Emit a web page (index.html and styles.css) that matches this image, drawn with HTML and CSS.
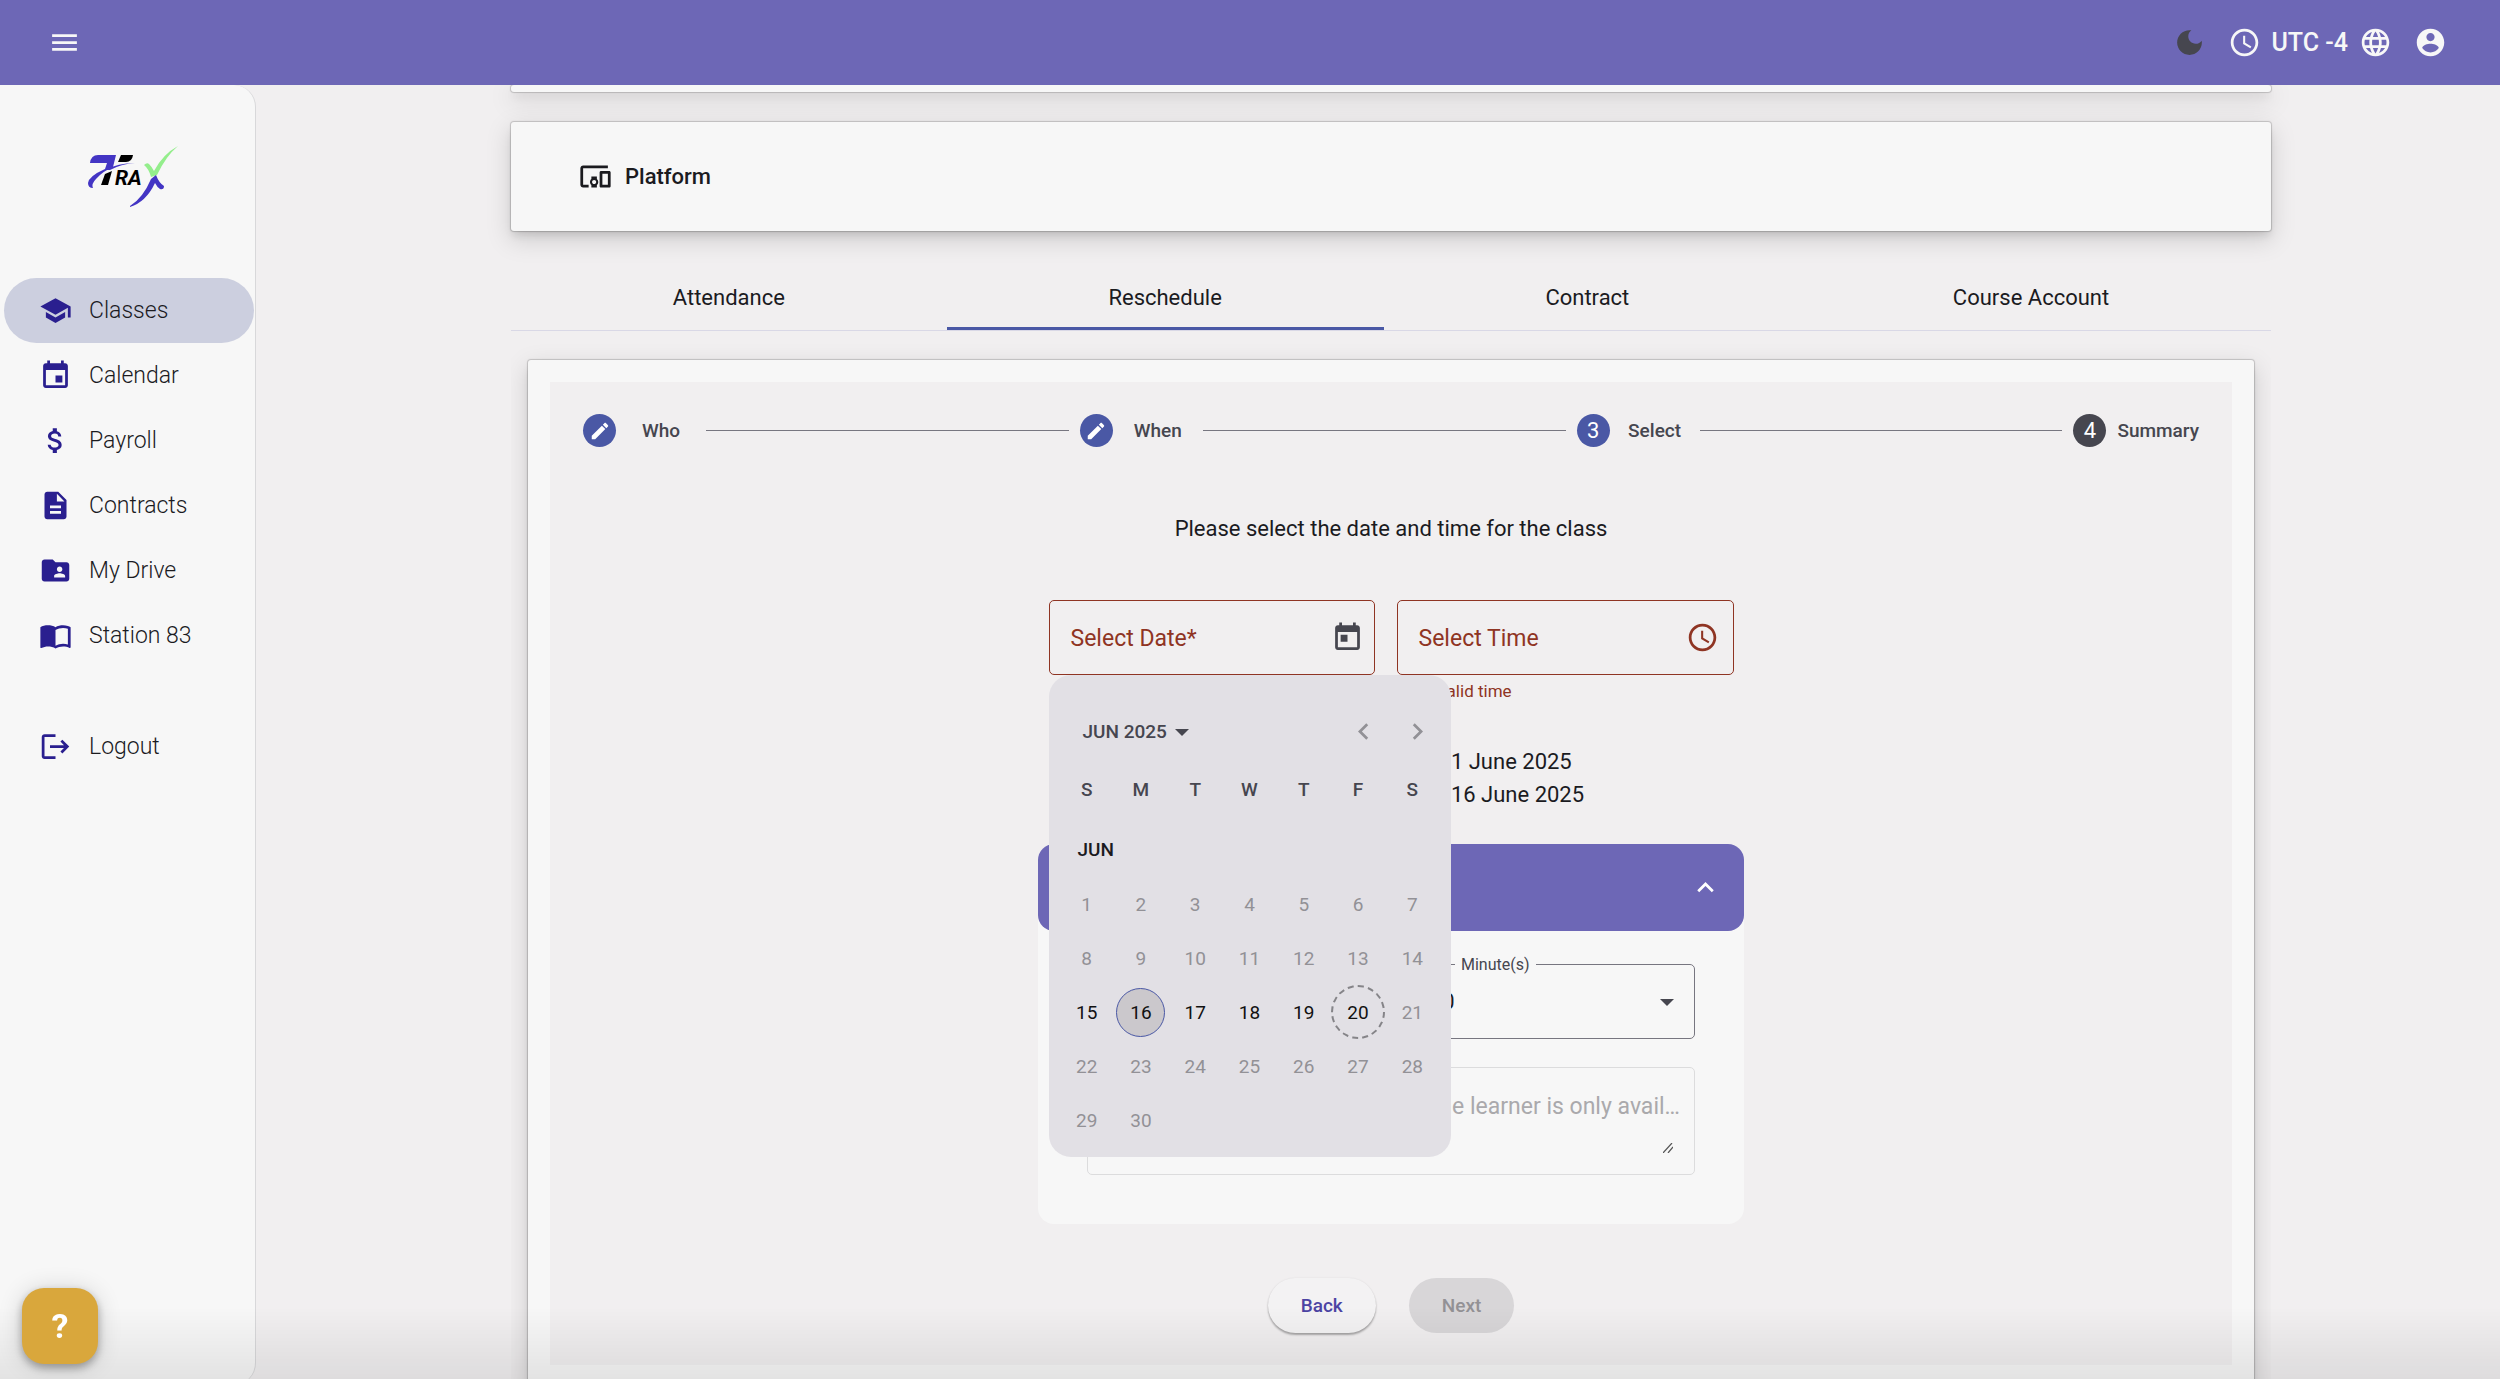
FILE: index.html
```html
<!DOCTYPE html>
<html lang="en">
<head>
    <meta charset="UTF-8">
    <meta name="viewport" content="width=device-width, initial-scale=1.0">
    <title>Trax - Classes</title>
    <link rel="stylesheet" href="styles.css">
</head>
<body>
    <header class="topbar">
        <button class="icon-btn" aria-label="Menu">
            <svg class="icon" viewBox="0 0 24 24"><path d="M3 18h18v-2H3v2zm0-5h18v-2H3v2zm0-7v2h18V6H3z"/></svg>
        </button>
        <div class="topbar-right">
            <button class="icon-btn moon" aria-label="Dark mode">
                <svg class="icon" viewBox="0 0 24 24"><path d="M12 3c-4.97 0-9 4.03-9 9s4.03 9 9 9 9-4.03 9-9c0-.46-.04-.92-.1-1.36-.98 1.37-2.58 2.26-4.4 2.26-2.98 0-5.4-2.42-5.4-5.4 0-1.81.89-3.42 2.26-4.4-.44-.06-.9-.1-1.36-.1z"/></svg>
            </button>
            <button class="utc">
                <svg class="icon" viewBox="0 0 24 24"><path d="M11.99 2C6.47 2 2 6.48 2 12s4.47 10 9.99 10C17.52 22 22 17.52 22 12S17.52 2 11.99 2zM12 20c-4.42 0-8-3.58-8-8s3.58-8 8-8 8 3.58 8 8-3.58 8-8 8zm.5-13H11v6l5.25 3.15.75-1.23-4.5-2.67z"/></svg>
                <span>UTC -4</span>
                <svg class="icon" viewBox="0 0 24 24"><path d="M11.99 2C6.47 2 2 6.48 2 12s4.47 10 9.99 10C17.52 22 22 17.52 22 12S17.52 2 11.99 2zm6.93 6h-2.95c-.32-1.25-.78-2.45-1.38-3.56 1.84.63 3.37 1.91 4.33 3.56zM12 4.04c.83 1.2 1.48 2.53 1.91 3.96h-3.82c.43-1.43 1.08-2.76 1.91-3.96zM4.26 14C4.1 13.36 4 12.69 4 12s.1-1.36.26-2h3.38c-.08.66-.14 1.32-.14 2s.06 1.34.14 2H4.26zm.82 2h2.95c.32 1.25.78 2.45 1.38 3.56-1.84-.63-3.37-1.9-4.33-3.56zm2.95-8H5.08c.96-1.66 2.49-2.93 4.33-3.56C8.81 5.55 8.35 6.75 8.03 8zM12 19.96c-.83-1.2-1.48-2.53-1.91-3.96h3.82c-.43 1.43-1.08 2.76-1.91 3.96zM14.34 14H9.66c-.09-.66-.16-1.32-.16-2s.07-1.35.16-2h4.68c.09.65.16 1.32.16 2s-.07 1.34-.16 2zm.25 5.56c.6-1.11 1.06-2.31 1.38-3.56h2.95c-.96 1.65-2.49 2.93-4.33 3.56zM16.36 14c.08-.66.14-1.32.14-2s-.06-1.34-.14-2h3.38c.16.64.26 1.31.26 2s-.1 1.36-.26 2h-3.38z"/></svg>
            </button>
            <button class="icon-btn" aria-label="Account">
                <svg class="icon" viewBox="0 0 24 24"><path d="M12 2C6.48 2 2 6.48 2 12s4.48 10 10 10 10-4.48 10-10S17.52 2 12 2zm0 3c1.66 0 3 1.34 3 3s-1.34 3-3 3-3-1.34-3-3 1.34-3 3-3zm0 14.2c-2.5 0-4.71-1.28-6-3.22.03-1.99 4-3.08 6-3.08 1.99 0 5.97 1.09 6 3.08-1.29 1.94-3.5 3.22-6 3.22z"/></svg>
            </button>
        </div>
    </header>

    <div class="layout">
        <aside class="sidebar">
            <!-- logo: two tone swoosh, RA, tick and tail -->
            <svg class="logo" viewBox="0 0 90 62" role="img" aria-label="Trax">
                <path fill="#4335c4" d="M2 17 Q3 9 10 9 H28 L25 21 Q15 25 8 33 Q3 38 5 42 Q0 42 0 37 Q1 30 17 23 L19 17 Z"/>
                <path fill="#4335c4" d="M17 24 Q30 17 47 17 Q33 18 22 24 Z"/>
                <path fill="#000" d="M33 9 H45 Q44 16 38 16 H30 Z"/>
                <path fill="#000" d="M17 28 L24 25 L20 39 H13 Z"/>
                <text x="27" y="39" class="logo-text">RA</text>
                <path fill="#94ee8c" d="M90 0 Q78 10 69 29 L63 31 Q61 23 56 19 Q59 16 61 18 Q64 21 66 25 Q75 8 90 0 Z"/>
                <path fill="#4335c4" d="M42 60 Q55 52 63 33 L68 29 Q71 37 76 40 Q76 44 72 43 Q69 41 67 37 Q58 56 42 61 Z"/>
            </svg>
            <nav class="nav">
                <a class="nav-link active" href="#">
                    <svg class="icon" viewBox="0 0 24 24"><path d="M5 13.18v4L12 21l7-3.82v-4L12 17l-7-3.82zM12 3L1 9l11 6 9-4.91V17h2V9L12 3z"/></svg>
                    Classes
                </a>
                <a class="nav-link" href="#">
                    <svg class="icon" viewBox="0 0 24 24"><path d="M17 12h-5v5h5v-5zM16 1v2H8V1H6v2H5c-1.11 0-1.99.9-1.99 2L3 19c0 1.1.89 2 2 2h14c1.1 0 2-.9 2-2V5c0-1.1-.9-2-2-2h-1V1h-2zm3 18H5V8h14v11z"/></svg>
                    Calendar
                </a>
                <a class="nav-link" href="#">
                    <svg class="icon" viewBox="0 0 24 24"><path d="M11.8 10.9c-2.27-.59-3-1.2-3-2.15 0-1.09 1.01-1.85 2.7-1.85 1.78 0 2.44.85 2.5 2.1h2.21c-.07-1.72-1.12-3.3-3.21-3.81V3h-3v2.16c-1.94.42-3.5 1.68-3.5 3.61 0 2.31 1.91 3.46 4.7 4.13 2.5.6 3 1.48 3 2.41 0 .69-.49 1.79-2.7 1.79-2.06 0-2.87-.92-2.98-2.1h-2.2c.12 2.19 1.76 3.42 3.68 3.83V21h3v-2.15c1.95-.37 3.5-1.5 3.5-3.55 0-2.84-2.43-3.81-4.7-4.4z"/></svg>
                    Payroll
                </a>
                <a class="nav-link" href="#">
                    <svg class="icon" viewBox="0 0 24 24"><path d="M14 2H6c-1.1 0-1.99.9-1.99 2L4 20c0 1.1.89 2 1.99 2H18c1.1 0 2-.9 2-2V8l-6-6zm2 16H8v-2h8v2zm0-4H8v-2h8v2zm-3-5V3.5L18.5 9H13z"/></svg>
                    Contracts
                </a>
                <a class="nav-link" href="#">
                    <svg class="icon" viewBox="0 0 24 24"><path d="M20 6h-8l-2-2H4c-1.1 0-1.99.9-1.99 2L2 18c0 1.1.9 2 2 2h16c1.1 0 2-.9 2-2V8c0-1.1-.9-2-2-2zm-5 3c1.1 0 2 .9 2 2s-.9 2-2 2-2-.9-2-2 .9-2 2-2zm4 8h-8v-1c0-1.33 2.67-2 4-2s4 .67 4 2v1z"/></svg>
                    My Drive
                </a>
                <a class="nav-link" href="#">
                    <svg class="icon" viewBox="0 0 24 24"><path d="M21 5c-1.11-.35-2.33-.5-3.5-.5-1.95 0-4.05.4-5.5 1.5-1.45-1.1-3.55-1.5-5.5-1.5S2.45 4.9 1 6v14.65c0 .25.25.5.5.5.1 0 .15-.05.25-.05C3.1 20.45 5.05 20 6.5 20c1.95 0 4.05.4 5.5 1.5 1.35-.85 3.8-1.5 5.5-1.5 1.65 0 3.35.3 4.75 1.05.1.05.15.05.25.05.25 0 .5-.25.5-.5V6c-.6-.45-1.25-.75-2-1zm0 13.5c-1.1-.35-2.3-.5-3.5-.5-1.7 0-4.15.65-5.5 1.5V8c1.35-.85 3.8-1.5 5.5-1.5 1.2 0 2.4.15 3.5.5v11.5z"/></svg>
                    Station 83
                </a>
                <a class="nav-link logout" href="#">
                    <svg class="icon" viewBox="0 0 24 24"><path d="M17 7l-1.41 1.41L18.17 11H8v2h10.17l-2.58 2.58L17 17l5-5zM4 5h8V3H4c-1.1 0-2 .9-2 2v14c0 1.1.9 2 2 2h8v-2H4V5z"/></svg>
                    Logout
                </a>
            </nav>
        </aside>

        <main class="main">
            <div class="content">
                <div class="card card-above"></div>
                <section class="card platform">
                    <svg class="icon" viewBox="0 0 24 24"><path d="M3 6h18V4H3c-1.1 0-2 .9-2 2v12c0 1.1.9 2 2 2h4v-2H3V6zm10 6H9v1.78c-.61.55-1 1.33-1 2.22s.39 1.67 1 2.22V20h4v-1.78c.61-.55 1-1.34 1-2.22s-.39-1.67-1-2.22V12zm-2 5.5c-.83 0-1.5-.67-1.5-1.5s.67-1.5 1.5-1.5 1.5.67 1.5 1.5-.67 1.5-1.5 1.5zM22 8h-6c-.5 0-1 .5-1 1v10c0 .5.5 1 1 1h6c.5 0 1-.5 1-1V9c0-.5-.5-1-1-1zm-1 10h-4v-8h4v8z"/></svg>
                    <h2>Platform</h2>
                </section>

                <div class="tabs" role="tablist">
                    <button class="tab" role="tab">Attendance</button>
                    <button class="tab active" role="tab" aria-selected="true">Reschedule</button>
                    <button class="tab" role="tab">Contract</button>
                    <button class="tab" role="tab">Course Account</button>
                </div>

                <div class="tab-body">
                    <div class="card tab-card">
                        <div class="stepper">
                            <div class="steps">
                                <div class="step">
                                    <span class="step-dot"><svg viewBox="0 0 24 24"><path d="M3 17.25V21h3.75L17.81 9.94l-3.75-3.75L3 17.25zM20.71 7.04c.39-.39.39-1.02 0-1.41l-2.34-2.34c-.39-.39-1.02-.39-1.41 0l-1.83 1.83 3.75 3.75 1.83-1.83z"/></svg></span>
                                    <span class="step-label">Who</span>
                                </div>
                                <div class="step-line"></div>
                                <div class="step">
                                    <span class="step-dot"><svg viewBox="0 0 24 24"><path d="M3 17.25V21h3.75L17.81 9.94l-3.75-3.75L3 17.25zM20.71 7.04c.39-.39.39-1.02 0-1.41l-2.34-2.34c-.39-.39-1.02-.39-1.41 0l-1.83 1.83 3.75 3.75 1.83-1.83z"/></svg></span>
                                    <span class="step-label">When</span>
                                </div>
                                <div class="step-line"></div>
                                <div class="step">
                                    <span class="step-dot">3</span>
                                    <span class="step-label">Select</span>
                                </div>
                                <div class="step-line"></div>
                                <div class="step">
                                    <span class="step-dot todo">4</span>
                                    <span class="step-label">Summary</span>
                                </div>
                            </div>

                            <p class="prompt">Please select the date and time for the class</p>

                            <form class="form">
                                <div class="fields">
                                    <div class="field date">
                                        <input id="date" type="text">
                                        <label for="date">Select Date*</label>
                                        <button type="button" class="field-icon" aria-label="Open calendar">
                                            <svg class="icon" viewBox="0 0 24 24"><path d="M19 3h-1V1h-2v2H8V1H6v2H5c-1.11 0-1.99.9-1.99 2L3 19c0 1.1.89 2 2 2h14c1.1 0 2-.9 2-2V5c0-1.1-.9-2-2-2zm0 16H5V8h14v11zM7 10h5v5H7z"/></svg>
                                        </button>

                                        <div class="calendar">
                                            <div class="calendar-head">
                                                <button type="button" class="period">JUN 2025 <svg viewBox="0 0 10 5"><path d="M0 0l5 5 5-5z"/></svg></button>
                                                <button type="button" class="arrow" aria-label="Previous month" disabled><svg class="icon" viewBox="0 0 24 24"><path d="M15.41 7.41L14 6l-6 6 6 6 1.41-1.41L10.83 12z"/></svg></button>
                                                <button type="button" class="arrow" aria-label="Next month" disabled><svg class="icon" viewBox="0 0 24 24"><path d="M10 6L8.59 7.41 13.17 12l-4.58 4.59L10 18l6-6z"/></svg></button>
                                            </div>
                                            <table class="days">
                                                <thead>
                                                    <tr><th>S</th><th>M</th><th>T</th><th>W</th><th>T</th><th>F</th><th>S</th></tr>
                                                </thead>
                                                <tbody>
                                                    <tr><td class="month" colspan="7">JUN</td></tr>
                                                    <tr><td>1</td><td>2</td><td>3</td><td>4</td><td>5</td><td>6</td><td>7</td></tr>
                                                    <tr><td>8</td><td>9</td><td>10</td><td>11</td><td>12</td><td>13</td><td>14</td></tr>
                                                    <tr><td class="on">15</td><td class="on"><span class="picked">16</span></td><td class="on">17</td><td class="on">18</td><td class="on">19</td><td class="on"><span class="today">20</span></td><td>21</td></tr>
                                                    <tr><td>22</td><td>23</td><td>24</td><td>25</td><td>26</td><td>27</td><td>28</td></tr>
                                                    <tr><td>29</td><td>30</td><td></td><td></td><td></td><td></td><td></td></tr>
                                                </tbody>
                                            </table>
                                        </div>
                                    </div>
                                    <div class="field time">
                                        <input id="time" type="text">
                                        <label for="time">Select Time</label>
                                        <button type="button" class="field-icon" aria-label="Open time picker">
                                            <svg class="icon" viewBox="0 0 24 24"><path d="M11.99 2C6.47 2 2 6.48 2 12s4.47 10 9.99 10C17.52 22 22 17.52 22 12S17.52 2 11.99 2zM12 20c-4.42 0-8-3.58-8-8s3.58-8 8-8 8 3.58 8 8-3.58 8-8 8zm.5-13H11v6l5.25 3.15.75-1.23-4.5-2.67z"/></svg>
                                        </button>
                                        <p class="error">Invalid time</p>
                                    </div>
                                </div>

                                <dl class="dates">
                                    <dt>From</dt><dd>1 June 2025</dd>
                                    <dt>To</dt><dd>16 June 2025</dd>
                                </dl>

                                <div class="panel">
                                    <button type="button" class="panel-head" aria-label="Preferences">
                                        <svg class="icon" viewBox="0 0 24 24"><path d="M12 8l-6 6 1.41 1.41L12 10.83l4.59 4.58L18 14z"/></svg>
                                    </button>
                                    <div class="panel-body">
                                        <div class="selects">
                                            <div class="select-field">
                                                <label for="hours">Hour(s)</label>
                                                <select id="hours"><option>1</option></select>
                                            </div>
                                            <div class="select-field">
                                                <label for="minutes">Minute(s)</label>
                                                <select id="minutes"><option>30</option></select>
                                                <svg class="caret" viewBox="0 0 10 5"><path d="M0 0l5 5 5-5z"/></svg>
                                            </div>
                                        </div>
                                        <div class="note">
                                            <textarea aria-label="Note" disabled placeholder="Please add a note to this class, the learner is only avail…"></textarea>
                                            <svg class="grip" viewBox="0 0 10 10"><path d="M0 10L9 0M5 10L10 4" fill="none" stroke="#555" stroke-width="1.2"/></svg>
                                        </div>
                                    </div>
                                </div>

                                <div class="actions">
                                    <button type="button" class="btn back">Back</button>
                                    <button type="button" class="btn next" disabled>Next</button>
                                </div>
                            </form>
                        </div>
                    </div>
                </div>
            </div>
        </main>
    </div>

    <button class="help" aria-label="Help">?</button>
</body>
</html>
```

FILE: styles.css
```css
* {
    box-sizing: border-box;
}

body {
    margin: 0;
    height: 100vh;
    overflow: hidden;
    display: flex;
    flex-direction: column;
    background-color: #f1eff0;
    color: #1b1b1f;
    font-family: Roboto, sans-serif;
    font-size: 22px;
    line-height: 33px;
}

/* soft shade along the bottom of the window */
body::after {
    content: "";
    position: fixed;
    left: 0;
    right: 0;
    bottom: 0;
    height: 72px;
    background: linear-gradient(rgba(0, 0, 0, 0), rgba(0, 0, 0, 0.08));
    pointer-events: none;
}

h2, p, dl, dd {
    margin: 0;
}

button, input, select, textarea {
    font-family: inherit;
    font-size: 22px;
    color: inherit;
    background: none;
    border: none;
    padding: 0;
}

button {
    cursor: pointer;
}

.icon {
    display: block;
    width: 33px;
    height: 33px;
    fill: currentColor;
    flex: none;
}

/* top bar */
.topbar {
    flex: none;
    height: 85px;
    padding: 0 53px 0 48px;
    display: flex;
    align-items: center;
    justify-content: space-between;
    background-color: #6d67b6;
    color: #f7f7f7;
    position: relative;
    z-index: 2;
}

.topbar-right {
    display: flex;
    align-items: center;
    gap: 22px;
}

.moon {
    color: #46464f;
}

.utc {
    display: flex;
    align-items: center;
    gap: 11px;
    font-size: 25px;
    font-weight: 500;
}

/* sidebar */
.layout {
    flex: 1;
    min-height: 0;
    display: flex;
}

.sidebar {
    flex: none;
    width: 256px;
    margin-bottom: -6px;
    background-color: #f7f7f7;
    border-right: 1px solid #d8d8da;
    border-radius: 0 22px 22px 0;
}

.logo {
    display: block;
    width: 90px;
    height: 62px;
    margin: 61px 0 70px 88px;
}

.logo-text {
    font-size: 21px;
    font-weight: 700;
    font-style: italic;
}

.nav {
    display: flex;
    flex-direction: column;
    padding: 0 1px 0 4px;
}

.nav-link {
    display: flex;
    align-items: center;
    gap: 17px;
    height: 65px;
    padding-left: 35px;
    border-radius: 33px;
    color: #1b1b1f;
    font-size: 23px;
    font-weight: 300;
    text-decoration: none;
}

.nav-link .icon {
    color: #2a1f8f;
}

.nav-link.active {
    background-color: #cccfdf;
}

.logout {
    margin-top: 46px;
}

/* main column */
.main {
    flex: 1;
    min-width: 0;
    overflow: hidden;
    padding: 0 9px 0 35px;
}

.content {
    width: 80%;
    margin: 0 auto;
}

.card {
    background-color: #f7f7f7;
    border-radius: 3px;
    box-shadow: 0 0 1px 1px rgba(0, 0, 0, 0.18), 0 6px 8px -2px rgba(0, 0, 0, 0.12), 0 8px 24px 2px rgba(0, 0, 0, 0.13);
}

.card-above {
    height: 7px;
    margin-bottom: 30px;
}

.platform {
    display: flex;
    align-items: center;
    gap: 13px;
    height: 109px;
    padding-left: 68px;
}

.platform h2 {
    font-size: 22px;
    font-weight: 500;
}

.tabs {
    display: flex;
    margin-top: 34px;
    border-bottom: 1px solid #d9d8e6;
}

.tab {
    flex: 1 1 auto;
    height: 65px;
    padding: 3px 33px 0;
    border-bottom: 3px solid transparent;
}

.tab.active {
    border-bottom-color: #4a58a5;
}

.tab-body {
    overflow: hidden;
    padding: 29px 17px 60px;
}

.tab-card {
    padding: 22px;
}

.stepper {
    background-color: #f1eff0;
    padding: 32px 33px;
}

/* stepper header */
.steps {
    display: flex;
    align-items: center;
    height: 33px;
    color: #46464f;
    font-size: 19px;
    font-weight: 500;
}

.step {
    display: flex;
    align-items: center;
    gap: 11px;
}

.step-dot {
    display: flex;
    align-items: center;
    justify-content: center;
    width: 33px;
    height: 33px;
    border-radius: 50%;
    background-color: #4a58a5;
    color: #fff;
    font-size: 22px;
    font-weight: 400;
}

.step-dot svg {
    width: 22px;
    height: 22px;
    fill: #fff;
}

.step-dot.todo {
    background-color: #46464f;
}

.step-label {
    min-width: 68px;
    text-align: center;
}

.step-line {
    flex: 1;
    margin: 0 11px;
    border-top: 1px solid #777680;
}

.prompt {
    margin: 65px 0 55px;
    text-align: center;
}

.form {
    display: flex;
    flex-direction: column;
    align-items: center;
}

/* date and time fields */
.fields {
    display: flex;
    gap: 22px;
    color: #8f3423;
}

.field {
    position: relative;
    height: 145px;
}

.date {
    width: 326px;
}

.time {
    width: 337px;
}

.field input {
    display: block;
    width: 100%;
    height: 75px;
    padding: 0 64px 0 22px;
    border: 1px solid #8f3423;
    border-radius: 5px;
}

.field label {
    position: absolute;
    top: 22px;
    left: 22px;
    font-size: 23px;
    pointer-events: none;
}

.field-icon {
    position: absolute;
    top: 21px;
    right: 11px;
}

.time .field-icon {
    right: 15px;
}

.date .field-icon {
    color: #46464f;
}

.error {
    padding: 0 28px;
    font-size: 17px;
}

/* calendar popup */
.calendar {
    position: absolute;
    top: 75px;
    left: 0;
    z-index: 1;
    width: 402px;
    padding: 32px 11px 10px;
    border-radius: 22px;
    background-color: #e2e0e5;
    color: #929196;
}

.calendar-head {
    display: flex;
    align-items: center;
    height: 49px;
    margin-right: -4px;
    padding-left: 23px;
}

.period {
    margin-right: auto;
    color: #46464f;
    font-size: 19px;
    font-weight: 500;
}

.period svg {
    width: 14px;
    height: 7px;
    margin: 0 0 2px 3px;
    fill: #46464f;
}

.arrow {
    width: 54px;
    padding: 0 11px;
    color: #929196;
}

.days {
    width: 100%;
    table-layout: fixed;
    border-collapse: collapse;
    font-size: 19px;
    text-align: center;
}

.days th {
    height: 66px;
    padding: 0;
    color: #46464f;
    font-weight: 500;
}

.days td {
    height: 54px;
    padding: 0;
}

.days .month {
    height: 55px;
    padding-left: 18px;
    color: #1b1b1f;
    font-weight: 500;
    text-align: left;
}

.days .on {
    color: #111;
}

.picked, .today {
    display: flex;
    align-items: center;
    justify-content: center;
    margin: 0 auto;
    border-radius: 50%;
}

.picked {
    width: 49px;
    height: 49px;
    border: 1px solid #4a58a5;
    background-color: #cbc8cc;
}

.today {
    width: 54px;
    height: 54px;
    border: 2px dashed #858488;
}

.dates {
    display: grid;
    grid-template-columns: 253px auto;
}

/* collapsible panel */
.panel {
    width: 706px;
    margin-top: 33px;
    border-radius: 16px;
    background-color: #f7f7f7;
}

.panel-head {
    display: flex;
    align-items: center;
    justify-content: flex-end;
    width: 100%;
    height: 87px;
    padding: 0 22px 0 33px;
    border-radius: 16px;
    background-color: #6d67b6;
    color: #fff;
}

.panel-body {
    padding: 33px 49px 49px;
}

.selects {
    display: flex;
    gap: 32px;
}

.select-field {
    position: relative;
    flex: 1;
}

.select-field label {
    position: absolute;
    top: -16px;
    left: 48px;
    padding: 0 6px;
    background-color: #f7f7f7;
    color: #46464f;
    font-size: 16px;
}

.select-field select {
    display: block;
    width: 100%;
    height: 75px;
    padding: 0 22px;
    border: 1px solid #777680;
    border-radius: 5px;
    appearance: none;
}

.caret {
    position: absolute;
    top: 35px;
    right: 21px;
    width: 14px;
    height: 7px;
    fill: #46464f;
}

.note {
    position: relative;
    margin-top: 28px;
}

.note textarea {
    display: block;
    width: 100%;
    height: 108px;
    padding: 22px 10px 22px 22px;
    border: 1px solid #dcdcdd;
    border-radius: 5px;
    font-size: 23px;
    line-height: 33px;
    overflow: hidden;
    resize: none;
}

.note textarea::placeholder {
    color: #aaa9ac;
    white-space: nowrap;
}

.grip {
    position: absolute;
    right: 22px;
    bottom: 22px;
    width: 10px;
    height: 10px;
}

/* buttons */
.actions {
    display: flex;
    gap: 33px;
    margin-top: 54px;
}

.btn {
    height: 55px;
    padding: 0 33px;
    border-radius: 28px;
    font-size: 19px;
    font-weight: 500;
}

.back {
    color: #4c44a3;
    box-shadow: 0 2px 2px rgba(0, 0, 0, 0.3), 0 0 2px rgba(0, 0, 0, 0.08);
    background-color: #f3f2f3;
}

.next {
    background-color: #d8d6d8;
    color: #939195;
}

.help {
    position: fixed;
    left: 22px;
    bottom: 15px;
    z-index: 3;
    width: 76px;
    height: 76px;
    border-radius: 22px;
    background-color: #d9a73c;
    color: #fff;
    font-size: 34px;
    font-weight: 700;
    box-shadow: 0 4px 8px rgba(0, 0, 0, 0.3), 0 2px 24px rgba(0, 0, 0, 0.16);
}
```
